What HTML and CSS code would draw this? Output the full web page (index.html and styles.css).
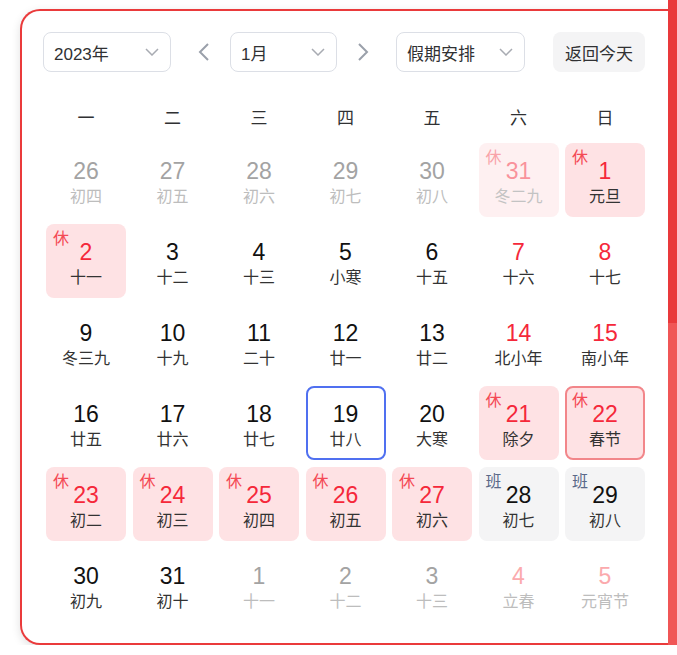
FILE: index.html
```html
<!DOCTYPE html>
<html lang="zh-CN">
<head>
<meta charset="utf-8">
<title>日历</title>
<link rel="stylesheet" href="styles.css">
</head>
<body>
<div class="card">
  <div class="toolbar">
    <div class="select select-year"><span>2023年</span><svg class="chev" width="14" height="8" viewBox="0 0 14 8"><path d="M1 1 L7 7 L13 1" /></svg></div>
    <button class="arrow arrow-prev"><svg width="12" height="20" viewBox="0 0 12 20"><path d="M10 2 L2 10 L10 18" /></svg></button>
    <div class="select select-month"><span>1月</span><svg class="chev" width="14" height="8" viewBox="0 0 14 8"><path d="M1 1 L7 7 L13 1" /></svg></div>
    <button class="arrow arrow-next"><svg width="12" height="20" viewBox="0 0 12 20"><path d="M2 2 L10 10 L2 18" /></svg></button>
    <div class="select select-holiday"><span>假期安排</span><svg class="chev" width="14" height="8" viewBox="0 0 14 8"><path d="M1 1 L7 7 L13 1" /></svg></div>
    <button class="today-btn">返回今天</button>
  </div>

  <div class="weekdays">
    <div>一</div><div>二</div><div>三</div><div>四</div><div>五</div><div>六</div><div>日</div>
  </div>

  <div class="days">
    <div class="day other"><span class="num">26</span><span class="lunar">初四</span></div>
    <div class="day other"><span class="num">27</span><span class="lunar">初五</span></div>
    <div class="day other"><span class="num">28</span><span class="lunar">初六</span></div>
    <div class="day other"><span class="num">29</span><span class="lunar">初七</span></div>
    <div class="day other"><span class="num">30</span><span class="lunar">初八</span></div>
    <div class="day rest faded"><span class="tag">休</span><span class="num">31</span><span class="lunar">冬二九</span></div>
    <div class="day rest"><span class="tag">休</span><span class="num">1</span><span class="lunar">元旦</span></div>

    <div class="day rest"><span class="tag">休</span><span class="num">2</span><span class="lunar">十一</span></div>
    <div class="day"><span class="num">3</span><span class="lunar">十二</span></div>
    <div class="day"><span class="num">4</span><span class="lunar">十三</span></div>
    <div class="day"><span class="num">5</span><span class="lunar">小寒</span></div>
    <div class="day"><span class="num">6</span><span class="lunar">十五</span></div>
    <div class="day weekend"><span class="num">7</span><span class="lunar">十六</span></div>
    <div class="day weekend"><span class="num">8</span><span class="lunar">十七</span></div>

    <div class="day"><span class="num">9</span><span class="lunar">冬三九</span></div>
    <div class="day"><span class="num">10</span><span class="lunar">十九</span></div>
    <div class="day"><span class="num">11</span><span class="lunar">二十</span></div>
    <div class="day"><span class="num">12</span><span class="lunar">廿一</span></div>
    <div class="day"><span class="num">13</span><span class="lunar">廿二</span></div>
    <div class="day weekend"><span class="num">14</span><span class="lunar">北小年</span></div>
    <div class="day weekend"><span class="num">15</span><span class="lunar">南小年</span></div>

    <div class="day"><span class="num">16</span><span class="lunar">廿五</span></div>
    <div class="day"><span class="num">17</span><span class="lunar">廿六</span></div>
    <div class="day"><span class="num">18</span><span class="lunar">廿七</span></div>
    <div class="day today"><span class="num">19</span><span class="lunar">廿八</span></div>
    <div class="day"><span class="num">20</span><span class="lunar">大寒</span></div>
    <div class="day rest"><span class="tag">休</span><span class="num">21</span><span class="lunar">除夕</span></div>
    <div class="day rest selected"><span class="tag">休</span><span class="num">22</span><span class="lunar">春节</span></div>

    <div class="day rest"><span class="tag">休</span><span class="num">23</span><span class="lunar">初二</span></div>
    <div class="day rest"><span class="tag">休</span><span class="num">24</span><span class="lunar">初三</span></div>
    <div class="day rest"><span class="tag">休</span><span class="num">25</span><span class="lunar">初四</span></div>
    <div class="day rest"><span class="tag">休</span><span class="num">26</span><span class="lunar">初五</span></div>
    <div class="day rest"><span class="tag">休</span><span class="num">27</span><span class="lunar">初六</span></div>
    <div class="day work"><span class="tag">班</span><span class="num">28</span><span class="lunar">初七</span></div>
    <div class="day work"><span class="tag">班</span><span class="num">29</span><span class="lunar">初八</span></div>

    <div class="day"><span class="num">30</span><span class="lunar">初九</span></div>
    <div class="day"><span class="num">31</span><span class="lunar">初十</span></div>
    <div class="day other"><span class="num">1</span><span class="lunar">十一</span></div>
    <div class="day other"><span class="num">2</span><span class="lunar">十二</span></div>
    <div class="day other"><span class="num">3</span><span class="lunar">十三</span></div>
    <div class="day other weekend"><span class="num">4</span><span class="lunar">立春</span></div>
    <div class="day other weekend"><span class="num">5</span><span class="lunar">元宵节</span></div>
  </div>
</div>
<div class="side-bar"></div>
</body>
</html>
```

FILE: styles.css
```css
* { box-sizing: border-box; }

html, body {
  margin: 0;
  background: #fff;
  overflow: hidden;
}

body {
  padding: 9px 0 0 20px;
  font-family: "Liberation Sans", "Noto Sans CJK SC", sans-serif;
  color: #303133;
}

.card {
  width: 648px;
  border: 2px solid #ea3a3b;
  border-right: none;
  border-radius: 20px 0 0 20px;
  padding: 21px 23px 21px 21px;
  background: #fff;
  box-shadow: 0 3px 10px rgba(0, 0, 0, 0.12);
}

.toolbar {
  display: flex;
  align-items: center;
  height: 40px;
}

.select {
  height: 40px;
  border: 1px solid #dcdfe6;
  border-radius: 8px;
  display: flex;
  align-items: center;
  justify-content: space-between;
  padding: 0 11px 0 10px;
  font-size: 17px;
  color: #303133;
}

.select-year { width: 128px; }
.select-month { width: 107px; }
.select-holiday { width: 129px; }

.chev path {
  fill: none;
  stroke: #a8abb2;
  stroke-width: 1.5;
}

.arrow {
  width: 26px;
  height: 40px;
  padding: 0;
  border: none;
  background: none;
  display: flex;
  align-items: center;
  justify-content: center;
}

.arrow path {
  fill: none;
  stroke: #9aa0aa;
  stroke-width: 2;
}

.arrow-prev { margin: 0 13px 0 20px; }
.arrow-next { margin: 0 20px 0 13px; }

.today-btn {
  margin-left: 28px;
  width: 92px;
  height: 40px;
  border: none;
  border-radius: 8px;
  background: #f4f4f5;
  font-family: "Liberation Sans", "Noto Sans CJK SC", sans-serif;
  font-size: 17px;
  color: #303133;
  padding: 0;
}

.weekdays,
.days {
  display: grid;
  grid-template-columns: repeat(7, 80px);
  column-gap: 6.5px;
  margin-left: 3px;
}

.weekdays {
  margin-top: 24px;
  height: 40px;
  align-items: center;
  text-align: center;
  font-size: 17px;
  color: #303133;
}

.days {
  margin-top: 7px;
  grid-auto-rows: 74px;
  row-gap: 7px;
}

.day {
  position: relative;
  display: flex;
  flex-direction: column;
  align-items: center;
  padding-top: 15px;
  border-radius: 8px;
}

.num {
  font-size: 23px;
  line-height: 26px;
  color: #111;
}

.lunar {
  margin-top: 3px;
  font-size: 16px;
  line-height: 20px;
  color: #333;
}

.tag {
  position: absolute;
  left: 7px;
  top: 6px;
  font-size: 16px;
  line-height: 18px;
  color: #f44a55;
}

.other .num { color: #a3a3a3; }
.other .lunar { color: #bdbdbd; }

.weekend .num { color: #f5283a; }
.other.weekend .num { color: #fbaaad; }

.rest { background: #fee2e4; }
.rest .num { color: #f5283a; }

.faded { opacity: 0.5; }
.faded .lunar { color: #888; }

.work { background: #f4f4f5; }
.work .tag { color: #5a6989; }
.work .num { color: #111; }

.today { border: 2px solid #5070f0; padding-top: 13px; }

.selected { border: 2px solid #f2868a; padding-top: 13px; }
.selected .tag { left: 5px; top: 4px; }

.side-bar {
  position: fixed;
  right: 0;
  top: 0;
  width: 9px;
  height: 645px;
  background: linear-gradient(#e9393b 0, #e9393b 323px, #f05656 323px, #f05656 100%);
}
```
